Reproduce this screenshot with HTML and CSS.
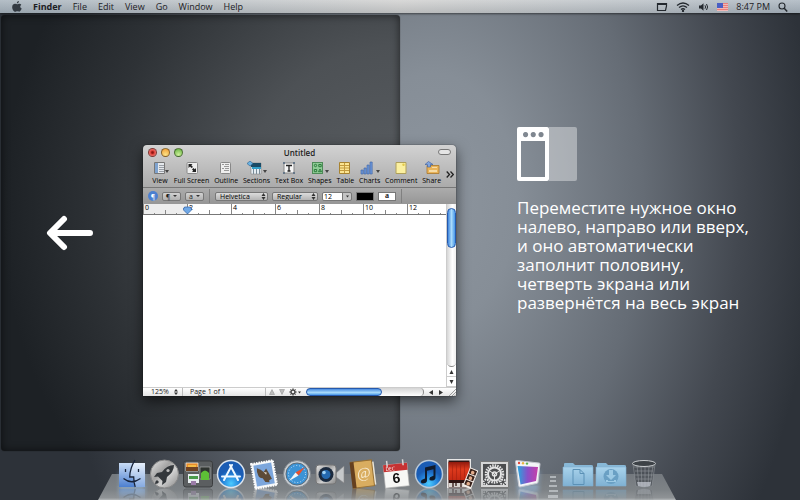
FILE: index.html
```html
<!DOCTYPE html>
<html lang="ru">
<head>
  <meta charset="UTF-8">
  <meta name="viewport" content="width=device-width, initial-scale=1.0">
  <title>Finder</title>
  <link rel="stylesheet" href="styles.css">
</head>
<body>
  <header class="menubar">
    <nav class="menu">
      <a href="#" aria-label="Apple">
        <svg width="10" height="11" viewBox="0 0 10 11"><path fill="#333a42" d="M6.9 0C7 1.300 6 2.500 4.800 2.500 4.700 1.300 5.700.2 6.900 0zM9.300 3.800C7.700 4.800 7.900 6.900 9.700 7.600 9.300 8.900 8.200 10.700 7.200 10.700 6.400 10.700 6.100 10.300 5.200 10.300S4 10.800 3.200 10.800C1.700 10.800 0 8 .2 5.700.4 3.600 1.900 2.700 3.100 2.800 4 2.800 4.600 3.300 5.200 3.300 5.800 3.300 6.400 2.700 7.500 2.700 8.200 2.700 8.900 3.100 9.300 3.800z"/></svg>
      </a>
      <a href="#" class="app-name">Finder</a>
      <a href="#">File</a>
      <a href="#">Edit</a>
      <a href="#">View</a>
      <a href="#">Go</a>
      <a href="#">Window</a>
      <a href="#">Help</a>
    </nav>
    <div class="status">
      <svg width="12" height="10" viewBox="0 0 12 10"><path d="M1.500 1.500h9v2.500l-1 4.500h-8z" fill="none" stroke="#23282e" stroke-width="1.200"/><path d="M1 1h10v2H1z" fill="#23282e"/></svg>
      <svg width="14" height="10" viewBox="0 0 14 10" fill="none" stroke="#23282e" stroke-width="1.300"><path d="M1 3.500q6-5 12 0M3 5.600q4-3.400 8 0M5 7.600q2-1.700 4 0"/><circle cx="7" cy="9" r=".5" fill="#23282e"/></svg>
      <svg width="11" height="10" viewBox="0 0 11 10"><path d="M1 3.500h2L5.500 1.200v7.600L3 6.500H1z" fill="#23282e"/><path d="M7 3.300q1.200 1.700 0 3.400M8.500 2q2.200 3 0 6" fill="none" stroke="#23282e"/></svg>
      <svg width="11" height="8" viewBox="0 0 11 8"><path fill="#f0b9b7" d="M0 0h11v8H0z"/><path stroke="#ea7f7b" d="M0 .5h11M0 2.500h11M0 4.500h11M0 6.500h11"/><path fill="#4a5fc4" d="M0 0h6v5H0z"/></svg>
      <time>8:47 PM</time>
      <svg width="10" height="10" viewBox="0 0 10 10" fill="none" stroke="#23282e"><circle cx="4" cy="4" r="3" stroke-width="1.100"/><path d="M6.200 6.200 9.200 9.400" stroke-width="1.500"/></svg>
    </div>
  </header>

  <main class="desktop">
    <section class="drop-zone">
      <svg width="48" height="36" viewBox="0 0 48 36" fill="none" stroke="#fff" stroke-width="6" stroke-linecap="round" stroke-linejoin="round"><path d="M44 18H5M18 4 4 18l14 14"/></svg>
    </section>

    <section class="tip">
      <svg width="60" height="54" viewBox="0 0 60 54">
        <path fill="#fff" fill-opacity=".38" d="M32 0h26q2 0 2 2v50q0 2-2 2H32z"/>
        <path fill="#fff" fill-rule="evenodd" d="M2 0h28q2 0 2 2v50q0 2-2 2H2q-2 0-2-2V2Q0 0 2 0zM4 14v36h24V14zM8.500 5a2.600 2.600 0 1 0 .1 0zM16.200 5a2.600 2.600 0 1 0 .1 0zM24 5a2.600 2.600 0 1 0 .1 0z"/>
      </svg>
      <p>Переместите нужное окно<br>налево, направо или вверх,<br>и оно автоматически<br>заполнит половину,<br>четверть экрана или<br>развернётся на весь экран</p>
    </section>

    <article class="window">
      <div class="titlebar">
        <div class="lights">
          <button class="light red" aria-label="Close"></button>
          <button class="light yellow" aria-label="Minimize"></button>
          <button class="light green" aria-label="Zoom"></button>
        </div>
        <h1>Untitled</h1>
        <button class="pill" aria-label="Toggle toolbar"></button>
      </div>

      <div class="toolbar">
        <button>
          <svg width="18" height="14" viewBox="0 0 18 14"><path fill="#e4e8ec" stroke="#777" d="M3.500 1.500h10v11h-10z"/><path fill="#7fa3cf" d="M4 2h3v10H4z"/><path stroke="#9a9fa6" d="M8 4.500h5M8 6.500h5M8 8.500h5M8 10.500h5"/><path fill="#444" d="M14 9h4l-2 3z"/></svg>
          View
        </button>
        <button>
          <svg width="14" height="14" viewBox="0 0 14 14"><rect x="2" y="1.500" width="10.500" height="11" rx="1" fill="#eee" stroke="#888"/><path fill="#222" d="M3.500 3h4L6.300 4.200 8 6 6.500 7 5 5.500 3.500 7zM11 11H7l1.200-1.200L7 8.500 8.500 7 9.800 8.300 11 7z"/></svg>
          Full Screen
        </button>
        <button>
          <svg width="14" height="14" viewBox="0 0 14 14"><rect x="1.500" y="1.500" width="10" height="11" rx="1" fill="#eee" stroke="#888"/><path stroke="#999" d="M3 3.500h2M6 3.500h4M5 5.500h5M3 7.500h2M6 7.500h4M5 9.500h5"/></svg>
          Outline
        </button>
        <button>
          <svg width="20" height="14" viewBox="0 0 20 14"><path fill="#e6eef4" stroke="#777" stroke-width=".5" d="M4 2h10v11H4z"/><path fill="#1b4b66" d="M4 2h10v4H4z"/><path fill="#32a0ca" d="M5 6h9v2H5z"/><path stroke="#7a8c98" d="M6.500 8v5M9.500 8v5M12.500 8v5"/><path fill="#69b2e3" stroke="#285f8c" stroke-width=".6" d="m3 0 3 2.500L3 5 0 2.500z"/><path fill="#444" d="M16 9h4l-2 3z"/></svg>
          Sections
        </button>
        <button>
          <svg width="14" height="14" viewBox="0 0 14 14"><path fill="#f5f5f5" stroke="#888" d="M2 2h10v10H2z"/><path stroke="#222" stroke-width="1.300" d="M4 4.500h6M7 4v6M5.500 10h3"/><path fill="#678" d="M1 1h2v2H1zM11 1h2v2h-2zM1 11h2v2H1zM11 11h2v2h-2z"/></svg>
          Text Box
        </button>
        <button>
          <svg width="18" height="14" viewBox="0 0 18 14"><rect x="1.500" y="1.500" width="10" height="11" fill="#8fcb96" stroke="#4e8a57"/><g fill="none" stroke="#2c7a3b"><circle cx="4.500" cy="4.500" r="1.200"/><path d="M7.800 3.500h2.400v2.200H7.800zM3.300 8.500h2.400v2.200H3.300zM7.500 10.700 9 8l1.500 2.700z"/></g><path fill="#444" d="M14 9h4l-2 3z"/></svg>
          Shapes
        </button>
        <button>
          <svg width="14" height="14" viewBox="0 0 14 14"><path fill="#fbe491" stroke="#a88330" d="M1.500 1.500h10v11h-10z"/><path stroke="#c39a3d" d="M6.500 2v10M2 4.500h9M2 7h9M2 9.500h9"/></svg>
          Table
        </button>
        <button>
          <svg width="20" height="14" viewBox="0 0 20 14"><g fill="#6c96d8" stroke="#3d62a4" stroke-width=".6"><path d="M1 9h2.200v4H1zM4 7h2.200v6H4zM7 4h2.200v9H7zM10 1h2.200v12H10z"/></g><path fill="#444" d="M16 9h4l-2 3z"/></svg>
          Charts
        </button>
        <button>
          <svg width="14" height="14" viewBox="0 0 14 14"><path fill="#fbf0a0" stroke="#b0a05a" d="M2 1.500h10v11H2z"/><circle cx="9.500" cy="3.800" r="1.200" fill="#e3c94a"/></svg>
          Comment
        </button>
        <button>
          <svg width="16" height="14" viewBox="0 0 16 14"><path fill="#e9b45a" stroke="#a9772b" stroke-width=".8" d="M3 4.500h12v8H3z"/><path fill="#f6dba5" d="M8 6h5v1H8zM5 9h8v2H5z"/><path fill="#7fa4de" stroke="#3a5c9b" stroke-width=".6" d="M4.500.5 9 3.500H6.500V6h-3V3.500H1z"/></svg>
          Share
        </button>
        <button class="more" aria-label="More">
          <svg width="8" height="7" viewBox="0 0 8 7" fill="none" stroke="#222" stroke-width="1.300"><path d="m.7.5 2.800 3-2.800 3M4.500.5l2.800 3-2.800 3"/></svg>
        </button>
      </div>

      <div class="formatbar">
        <button class="styles-btn" aria-label="Styles">¶</button>
        <button class="mini" aria-label="Paragraph style">¶ <i></i></button>
        <button class="mini" aria-label="Character style">a <i></i></button>
        <span class="divider"></span>
        <div class="pick">
          <select class="family" aria-label="Font"><option>Helvetica</option></select>
          <svg width="5" height="7" viewBox="0 0 5 7"><path fill="#333" d="M.5 3h4l-2-3zM.5 4h4l-2 3z"/></svg>
        </div>
        <div class="pick">
          <select aria-label="Typeface"><option>Regular</option></select>
          <svg width="5" height="7" viewBox="0 0 5 7"><path fill="#333" d="M.5 3h4l-2-3zM.5 4h4l-2 3z"/></svg>
        </div>
        <div class="pick size">
          <select aria-label="Size"><option>12</option></select>
          <svg width="5" height="7" viewBox="0 0 5 7"><path fill="#333" d="M1 2.500h3l-1.500 2z"/></svg>
        </div>
        <button class="swatch black" aria-label="Text color"></button>
        <button class="swatch" aria-label="Background color">a</button>
        <span class="divider"></span>
      </div>

      <div class="editor">
        <div class="page">
          <svg class="ruler" height="11">
            <defs>
              <pattern id="ticks" width="44" height="11" patternUnits="userSpaceOnUse">
                <path stroke="#888" d="M.5 0v11M11.500 9v2M22.500 6v5M33.500 9v2"/>
              </pattern>
            </defs>
            <rect width="44" height="11" fill="#ededed"/>
            <rect width="100%" height="11" fill="url(#ticks)"/>
            <path stroke="#777" d="M0 10.500h400"/>
            <text x="2" y="6">0</text><text x="46" y="6">2</text><text x="90" y="6">4</text><text x="134" y="6">6</text><text x="178" y="6">8</text><text x="222" y="6">10</text><text x="266" y="6">12</text>
            <path fill="#6fa8e6" stroke="#2f62a8" stroke-width=".7" d="M41.500 3h6v1h1v2l-4 4-4-4V4h1z"/>
          </svg>
          <textarea aria-label="Document"></textarea>
        </div>
        <div class="vscroll">
          <div class="vtrack"><div class="vthumb"></div></div>
          <button aria-label="Scroll up"><svg width="5" height="4" viewBox="0 0 5 4"><path fill="#333" d="M.5 4h4l-2-4z"/></svg></button>
          <button aria-label="Scroll down"><svg width="5" height="4" viewBox="0 0 5 4"><path fill="#333" d="M.5 0h4l-2 4z"/></svg></button>
        </div>
      </div>

      <div class="statusbar">
        <button class="zoom">125% <svg width="4" height="6" viewBox="0 0 4 6"><path fill="#333" d="M0 2.500h4L2 0zM0 3.500h4L2 6z"/></svg></button>
        <span class="pages">Page 1 of 1</span>
        <div class="nav-btns">
          <button aria-label="Previous"><svg width="6" height="6" viewBox="0 0 6 6"><path fill="#bbb" stroke="#888" stroke-width=".5" d="M.5 5.500h5L3 .5z"/></svg></button>
          <button aria-label="Next"><svg width="6" height="6" viewBox="0 0 6 6"><path fill="#bbb" stroke="#888" stroke-width=".5" d="M.5.5h5L3 5.500z"/></svg></button>
          <button aria-label="Actions"><svg width="12" height="8" viewBox="0 0 12 8"><circle cx="4" cy="4" r="2" fill="none" stroke="#444" stroke-width="1.400"/><path stroke="#444" d="M4 .3v1.500M4 6.200v1.500M.3 4h1.500M6.200 4h1.500M1.400 1.400l1 1M5.600 5.600l1 1M6.600 1.400l-1 1M2.400 5.600l-1 1"/><path fill="#333" d="M9 3.500h3l-1.500 2z"/></svg></button>
        </div>
        <div class="htrack"><div class="hthumb"></div></div>
        <button aria-label="Scroll left"><svg width="4" height="5" viewBox="0 0 4 5"><path fill="#333" d="M4 0v5L0 2.500z"/></svg></button>
        <button aria-label="Scroll right"><svg width="4" height="5" viewBox="0 0 4 5"><path fill="#333" d="M0 0v5l4-2.500z"/></svg></button>
        <svg width="8" height="8" viewBox="0 0 8 8"><path stroke="#888" stroke-width=".8" d="M1 8l7-7M4 8l4-4M6.500 8 8 6.500"/></svg>
      </div>
    </article>
  </main>

  <footer class="dock">
    <!-- Finder -->
    <svg class="running" viewBox="0 0 32 32">
      <defs>
        <linearGradient id="finderL" x2="0" y2="1"><stop stop-color="#c9dcf5"/><stop offset="1" stop-color="#4c7fd0"/></linearGradient>
        <linearGradient id="finderR" x2="0" y2="1"><stop stop-color="#e6effb"/><stop offset="1" stop-color="#86aae0"/></linearGradient>
        <linearGradient id="metal" x2="1" y2="1"><stop stop-color="#e6e6e6"/><stop offset=".4" stop-color="#a3a3a3"/><stop offset=".6" stop-color="#d2d2d2"/><stop offset="1" stop-color="#858585"/></linearGradient>
        <radialGradient id="blue" cy=".85"><stop stop-color="#4ccbff"/><stop offset=".6" stop-color="#2585dc"/><stop offset="1" stop-color="#1a5cb4"/></radialGradient>
        <linearGradient id="screen"><stop stop-color="#27a6dc"/><stop offset=".5" stop-color="#8a4fc8"/><stop offset="1" stop-color="#c63fa8"/></linearGradient>
        <linearGradient id="curtain" x2="0" y2="1"><stop stop-color="#8e1a0e"/><stop offset=".4" stop-color="#dd3a1d"/><stop offset="1" stop-color="#c52a14"/></linearGradient>
        <linearGradient id="folder" x2="0" y2="1"><stop stop-color="#a9d3ec"/><stop offset="1" stop-color="#7fb1d3"/></linearGradient>
      </defs>
      <path fill="url(#finderL)" d="M3 5h26v24H3z"/>
      <path fill="url(#finderR)" d="M18 5h11v24H18.500q-1-5-1-9h-4q0-8 4.500-15z"/>
      <path fill="none" stroke="#17233a" stroke-width="1.300" d="M19 2q-5 8-5.300 17h4q0 5 1.500 10M7.500 20.500q8 6.500 17 0M9.500 11v3M22.500 11v3"/>
    </svg>
    <!-- Launchpad -->
    <svg viewBox="0 0 32 32">
      <circle cx="15.500" cy="16" r="14" fill="url(#metal)" stroke="#888"/>
      <path fill="#34383c" d="M25 7q-7 0-12 7l-5 1-3 4 4-.5 4.500 4.500-.5 4 4-3 1-5q7-5 7-12zM8 22q-2 1-2 4 3 0 4-2z"/><circle cx="19" cy="12.500" r="1.600" fill="#bbb"/>
    </svg>
    <!-- Mission Control -->
    <svg viewBox="0 0 32 32">
      <rect x="1.500" y="3" width="29" height="26" rx="2.500" fill="#5b5e60" stroke="#3b3d3f"/>
      <path fill="#e88d2c" stroke="#eee" stroke-width=".7" d="M4 5h12v8H4z"/><path fill="#704223" d="M4 9h12v4H4z"/><path fill="#f6bc45" d="M6 7h8v2H6z"/>
      <path fill="#2f3430" stroke="#bbb" stroke-width=".6" d="M18 9h10v12H18z"/><path fill="#5dbf36" d="M19 15q4-5 8 0v7h-8z"/>
      <path fill="#e9eef0" d="M6 16h11v9H6z"/><path fill="#4b9b4b" d="M7 18h9v3H7z"/><path fill="#9b7ca8" d="M9 23h5v4H9z"/>
    </svg>
    <!-- App Store -->
    <svg viewBox="0 0 32 32">
      <circle cx="16" cy="16" r="13.500" fill="url(#blue)" stroke="#dce5ee" stroke-width="1.500"/>
      <g stroke="#eff8ff" stroke-width="2" stroke-linecap="round"><path d="M17 7 9 22M15 7l8 15M7 18.500h18"/></g>
    </svg>
    <!-- Mail -->
    <svg viewBox="0 0 32 32">
      <g transform="rotate(-10 16 16)">
        <path fill="#f3f5f7" stroke="#fff" stroke-width="2" stroke-dasharray="1.500 1" d="M5 4h22v25H5z"/>
        <path fill="#7ca6dc" d="M7 6h18v21H7z"/>
        <path fill="#5d4b38" d="M10 9q4 2 6 5l3-3 2 5 2 6-3 1v2l-4-1-2-4q-4-1-4-4-1-3 0-7z"/><path fill="#e5dccc" d="m16 14 3 1-1 2z"/>
      </g>
    </svg>
    <!-- Safari -->
    <svg viewBox="0 0 32 32">
      <circle cx="16" cy="16" r="13.500" fill="#c9cdd1" stroke="#82888e"/>
      <circle cx="16" cy="16" r="11" fill="#3c93d6" stroke="#5a6b79"/>
      <circle cx="16" cy="16" r="8.500" fill="none" stroke="#cfe9fa" stroke-dasharray="1 2"/>
      <path fill="#e8512f" d="m24 9-6.500 8.500-3-3z"/><path fill="#f3f5f6" d="m8 23 6.500-8.500 3 3z"/>
    </svg>
    <!-- FaceTime -->
    <svg viewBox="0 0 32 32">
      <path fill="#c5c8ca" stroke="#888" stroke-width=".6" d="m22 15 8-7v17l-8-6z"/>
      <rect x="2" y="7" width="20" height="19" rx="3" fill="url(#metal)" stroke="#777"/>
      <circle cx="12" cy="16.500" r="7.500" fill="#1b2a3e"/><circle cx="12" cy="16.500" r="4.500" fill="#2468ae"/><circle cx="10" cy="14.500" r="1.800" fill="#9fd2f5"/>
    </svg>
    <!-- Address Book -->
    <svg viewBox="0 0 32 32">
      <g transform="rotate(-7 16 16)">
        <path fill="#e9e4d8" d="M24 5h4v23h-4z"/><path fill="#d9ad60" stroke="#987032" d="M5 3h21v26H5z"/><path fill="#65401f" d="M4 3h4v26H4z"/>
        <text x="10" y="20" class="book-at">@</text>
      </g>
    </svg>
    <!-- Calendar -->
    <svg viewBox="0 0 32 32">
      <g transform="rotate(-6 16 16)">
        <path fill="#f7f7f5" stroke="#aaa" stroke-width=".6" d="M4 6h24v23H4z"/><path fill="#c63232" d="M4 6h24v7H4z"/>
        <path stroke="#d5d5d5" stroke-width="1.500" d="M8 2v6M24 2v6"/>
        <text x="6" y="12" class="cal-month">DEC</text>
        <text x="12" y="25" class="cal-day">6</text>
      </g>
    </svg>
    <!-- iTunes -->
    <svg viewBox="0 0 32 32">
      <circle cx="16" cy="16" r="13.500" fill="url(#blue)" stroke="#bac9d8" stroke-width="1.500"/>
      <path fill="#101b2c" d="M12 9.500 22.500 7v12.500q0 2.500-3 3t-3.200-1.600q0-2 3-2.700l1.200-.4V11.200l-6.500 1.500v9.600q0 2.500-3 3t-3.200-1.600q0-2 3-2.700l1.200-.4z"/>
    </svg>
    <!-- Photo Booth -->
    <svg viewBox="0 0 32 32">
      <path fill="#e7e7e7" d="M1 1h24v29H1z"/><path fill="#2e1412" d="M2.500 2.500h21v27h-21z"/><path fill="url(#curtain)" d="M2.500 4h21v18h-21z"/>
      <path stroke="#a3200f" stroke-width=".6" d="M6.500 5v17M10.500 5v17M14.500 5v17M18.500 5v17"/><path fill="#d9d4cf" d="M2.500 25h21v4h-21z"/><path stroke="#2e1412" stroke-width="1.300" d="M7 23v6M10 23v5M15 23v6"/>
      <g transform="rotate(22 24 20)"><path fill="#f4eee9" d="M20 10h9v20h-9z"/><path fill="#39221b" d="M21 11h7v5h-7zM21 17h7v5h-7zM21 23h7v5h-7z"/><g fill="#e3ad8c"><circle cx="24.500" cy="14" r="1.800"/><circle cx="24.500" cy="20" r="1.800"/><circle cx="24.500" cy="26" r="1.800"/></g></g>
    </svg>
    <!-- System Preferences -->
    <svg viewBox="0 0 32 32">
      <path fill="#d6d6d6" stroke="#777" d="M1.500 3.500h28v26h-28z"/><path fill="#4c4d4f" d="M4 6h23v21H4z"/>
      <g fill="none" stroke="#e4e4e4"><circle cx="15.500" cy="16" r="8.500" stroke-width="2.500" stroke-dasharray="1.500 1"/><circle cx="15.500" cy="16" r="6.500" stroke-width="2"/><circle cx="15.500" cy="16" r="2" stroke-width="1.500"/><path d="M15.500 16v6M15.500 16l-5-3M15.500 16l5-3"/><circle cx="7" cy="24" r="2.500" stroke-width="2" stroke-dasharray="1.500 1"/><circle cx="24" cy="24" r="2.500" stroke-width="2" stroke-dasharray="1.500 1"/></g>
    </svg>
    <!-- Window manager -->
    <svg class="running" viewBox="0 0 32 32">
      <path fill="#f3f4f7" stroke="#c4c7cf" d="M4.500 2.500 27 5q1 0 1 1l-2 18q0 1-1 1.300L8 29q-1 0-1.200-1L3.500 3.500q0-1 1-1z"/>
      <path fill="url(#screen)" d="M5.500 8 26 9l-2 14L8.500 26.500z"/>
      <circle cx="7" cy="5" r="1.200" fill="#e0483b"/><circle cx="11" cy="5.300" r="1.200" fill="#ecb53c"/><circle cx="15" cy="5.600" r="1.200" fill="#59b351"/>
    </svg>
    <!-- separator -->
    <svg class="sep" viewBox="0 0 16 42"><path fill="#d6dade" fill-opacity=".6" d="M5 18h6v2H5zM5 22h6v2H5zM4 27h8v2H4zM4 32h9v2H4zM3 37h10v3H3z"/></svg>
    <!-- Documents -->
    <svg viewBox="0 0 32 32">
      <path fill="#88b8d7" d="M2 6q0-1 1-1h8l2 2h16q2 0 2 1v19H2z"/><path fill="url(#folder)" stroke="#7fb0d0" stroke-width=".6" d="M1 9h30v19H1z"/>
      <path fill="none" stroke="#5b91b6" d="M11 11.500h7l4 4v11H11zM18 11.500v4h4"/>
    </svg>
    <!-- Downloads -->
    <svg viewBox="0 0 32 32">
      <path fill="#88b8d7" d="M2 6q0-1 1-1h8l2 2h16q2 0 2 1v19H2z"/><path fill="url(#folder)" stroke="#7fb0d0" stroke-width=".6" d="M1 9h30v19H1z"/>
      <circle cx="16" cy="18.500" r="7.500" fill="#6aa0c4"/><path fill="#9cc9e4" d="M14 12h4v5h3l-5 5-5-5h3zM11 22h2v1h6v-1h2v2H11z"/>
    </svg>
    <!-- Trash -->
    <svg viewBox="0 0 32 32">
      <path fill="#4b5056" fill-opacity=".8" d="M5 6h22l-3 22q-8 3-16 0z"/><path fill="none" stroke="#90959a" stroke-width=".6" d="M6 9h20M7 13h18M7 17h18M8 21h16M9 7l2 21M13 7l1 22M17 7v22M21 7l-1 22M25 7l-3 21M5 6l3 22q8 3 16 0l3-22"/>
      <path fill="#c9cdd6" fill-opacity=".7" d="M9 24h14l-1 4q-6 2-12 0z"/>
      <ellipse cx="16" cy="5.500" rx="11.500" ry="3" fill="#3d4247" stroke="#c9cccf"/>
    </svg>
  </footer>
</body>
</html>
```
FILE: styles.css
```css
* {
  box-sizing: border-box;
}
body {
  margin: 0;
  min-height: 100vh;
  display: flex;
  flex-direction: column;
  font-family: "Open Sans", sans-serif;
  overflow: hidden;
  background: radial-gradient(ellipse 48% 115% at 54% 40%, #8d959e 0%, #868e97 22%, #656c75 55%, #434850 80%, #2d3239 100%);
}
svg {
  display: block;
}
button {
  margin: 0;
  padding: 0;
  border: 0;
  background: none;
  font: inherit;
  color: inherit;
}

/* menu bar */
.menubar {
  display: flex;
  justify-content: space-between;
  align-items: center;
  height: 13px;
  padding: 0 12px;
  font-size: 9px;
  line-height: 13px;
  color: #1c2024;
  background: linear-gradient(rgba(255,255,255,0.15), rgba(60,70,80,0.15)), linear-gradient(90deg, #a7b3bd, #d2d2d1 50%, #abb6c0);
  box-shadow: 0 1px 2px rgba(0,0,0,0.5);
}
.menu,
.status {
  display: flex;
  align-items: center;
  gap: 11px;
}
.menu a {
  color: inherit;
  text-decoration: none;
}
.menu .app-name {
  font-weight: bold;
}
.status {
  gap: 8px;
}

/* desktop */
.desktop {
  flex: 1;
  position: relative;
  display: grid;
  grid-template-columns: 1fr 1fr;
}
.drop-zone {
  display: flex;
  align-items: center;
  margin: 2px 0 5px 1px;
  padding-left: 45px;
  border-radius: 4px;
  background: radial-gradient(ellipse 100% 95% at 100% 45%, #5a5e62 0%, #4d5155 40%, #2e3236 75%, #1d2125 100%);
  box-shadow: inset 0 0 8px rgba(0,0,0,0.6), 0 0 1px rgba(0,0,0,0.8);
}
.tip {
  display: flex;
  flex-direction: column;
  justify-content: center;
  gap: 17px;
  padding: 0 0 30px 117px;
  color: #fff;
}
.tip p {
  margin: 0;
  font-size: 17px;
  line-height: 19px;
  white-space: nowrap;
}

/* document window */
.window {
  position: absolute;
  left: 143px;
  top: 132px;
  width: 313px;
  height: 251px;
  display: flex;
  flex-direction: column;
  border-radius: 4px 4px 0 0;
  overflow: hidden;
  color: #222;
  font-size: 7px;
  background: linear-gradient(#d2d2d2, #a9a9a9 44px, #999 58px);
  box-shadow: 0 5px 14px rgba(0,0,0,0.6), 0 0 1px #000;
}
.titlebar {
  display: grid;
  grid-template-columns: 1fr auto 1fr;
  align-items: center;
  height: 14px;
  padding: 0 5px;
}
.titlebar h1 {
  margin: 0;
  font-size: 8px;
  font-weight: 600;
}
.lights {
  display: flex;
  gap: 4px;
}
.light {
  width: 9px;
  height: 9px;
  border: 1px solid rgba(0,0,0,0.45);
  border-radius: 50%;
}
.red {
  background: radial-gradient(#8e1512 15%, #e0443c 40%, #f2a09a);
}
.yellow {
  background: radial-gradient(circle at 50% 80%, #fce285, #f09a30);
}
.green {
  background: radial-gradient(circle at 50% 80%, #cdf09a, #5fae3c);
}
.pill {
  justify-self: end;
  width: 13px;
  height: 6px;
  border: 1px solid #777;
  border-radius: 3px;
  background: #e4e4e4;
}
.toolbar {
  display: flex;
  justify-content: space-between;
  height: 28px;
  padding: 2px 2px 0 8px;
}
.toolbar button {
  display: flex;
  flex-direction: column;
  align-items: center;
  line-height: 8px;
  white-space: nowrap;
  color: #000;
  gap: 2px;
}
.toolbar .more {
  justify-content: center;
}
.formatbar {
  display: flex;
  align-items: center;
  gap: 4px;
  height: 17px;
  padding-left: 5px;
  border-top: 1px solid #777;
  background: linear-gradient(#acacac, #969696);
}
.styles-btn {
  width: 10px;
  height: 10px;
  border-radius: 50%;
  background: #4b7fd0;
  color: #fff;
  line-height: 9px;
}
.mini {
  display: flex;
  justify-content: space-evenly;
  align-items: center;
  width: 19px;
  height: 9px;
  border: 1px solid #777;
  border-radius: 2px;
  background: linear-gradient(#d2d2d2, #b0b0b0);
  line-height: 7px;
}
.mini i {
  border: 2px solid transparent;
  border-top-color: #333;
  border-bottom: 0;
}
.divider {
  height: 14px;
  margin: 0 1px;
  border-left: 1px solid #808080;
}
.pick {
  position: relative;
}
.pick select {
  display: block;
  width: 46px;
  height: 9px;
  margin: 0;
  padding: 0 4px;
  appearance: none;
  border: 1px solid #777;
  border-radius: 2px;
  background: linear-gradient(#dcdcdc, #b4b4b4);
  color: #000;
  font: 7px/7px "Open Sans", sans-serif;
}
.pick .family {
  width: 53px;
}
.pick svg {
  position: absolute;
  right: 2px;
  top: 1px;
}
.size select {
  width: 30px;
  padding: 0 1px;
  background: linear-gradient(90deg, #fff 19px, #777 19px, #777 20px, #c4c4c4 20px);
}
.swatch {
  width: 18px;
  height: 9px;
  border: 1px solid #777;
  background: #fff;
  font-family: "Liberation Serif", serif;
  font-size: 8px;
  font-weight: bold;
  line-height: 6px;
}
.swatch.black {
  background: #000;
}
.editor {
  flex: 1;
  display: flex;
  min-height: 0;
  background: #fff;
}
.page {
  flex: 1;
  display: flex;
  flex-direction: column;
}
.ruler {
  width: 100%;
  font-size: 7px;
}
.page textarea {
  flex: 1;
  width: 100%;
  border: 0;
  padding: 8px;
  resize: none;
  background: #fff;
}
.vscroll {
  width: 10px;
  display: flex;
  flex-direction: column;
  border-left: 1px solid #ccc;
}
.vtrack {
  flex: 1;
  padding-top: 4px;
  border-radius: 0 0 5px 5px;
  border-bottom: 1px solid #888;
  background: linear-gradient(90deg, #d5d5d5, #fff 60%, #eee);
}
.vthumb {
  height: 40px;
  border: 1px solid #2559ad;
  border-radius: 5px;
  background: linear-gradient(90deg, #3f85dd, #a9dbfb 50%, #4797e8);
}
.vscroll button,
.statusbar button {
  display: flex;
  align-items: center;
  justify-content: center;
}
.vscroll button {
  height: 10px;
  border-bottom: 1px solid #ccc;
}
.statusbar {
  display: flex;
  align-items: center;
  height: 9px;
  border-top: 1px solid #ccc;
  background: linear-gradient(#fff, #e4e4e4);
  line-height: 8px;
  gap: 4px;
}
.statusbar .zoom {
  width: 35px;
  justify-content: space-between;
  padding-left: 8px;
}
.pages {
  width: 79px;
  padding-left: 7px;
  border-left: 1px solid #bbb;
}
.nav-btns {
  display: flex;
  gap: 4px;
  padding-left: 3px;
  border-left: 1px solid #bbb;
}
.htrack {
  flex: 1;
  margin-left: 1px;
  border-radius: 5px;
  border-right: 1px solid #888;
  background: linear-gradient(#d5d5d5, #fff);
}
.hthumb {
  width: 65%;
  height: 8px;
  border: 1px solid #2559ad;
  border-radius: 5px;
  background: linear-gradient(#4a8de2, #a9dbfb 60%, #4797e8);
}
.statusbar > button {
  width: 6px;
}

/* dock */
.dock {
  position: relative;
  display: flex;
  justify-content: center;
  gap: 1px;
  height: 44px;
  padding-right: 24px;
}
.dock::before {
  content: "";
  position: absolute;
  left: 98px;
  right: 124px;
  bottom: 0;
  height: 26px;
  clip-path: polygon(14px 0, calc(100% - 14px) 0, 100% 100%, 0 100%);
  background: linear-gradient(#74797e, #7d8286 60%, #8f9396 92%, #b4b8ba);
}
.dock svg {
  position: relative;
  width: 32px;
  height: 32px;
  margin-top: 2px;
  -webkit-box-reflect: below -4px linear-gradient(transparent 50%, rgba(0,0,0,0.5));
}
.dock .sep {
  width: 16px;
  height: 42px;
  -webkit-box-reflect: unset;
}
.dock .running {
  filter: drop-shadow(0 8px 2px rgba(160,205,255,0.3));
}
.book-at {
  font: 15px "Liberation Serif", serif;
  fill: #f7ead0;
}
.cal-month {
  font: 5px "Open Sans", sans-serif;
  fill: #fff;
}
.cal-day {
  font: bold 14px "Liberation Sans", sans-serif;
  fill: #111;
}
```
